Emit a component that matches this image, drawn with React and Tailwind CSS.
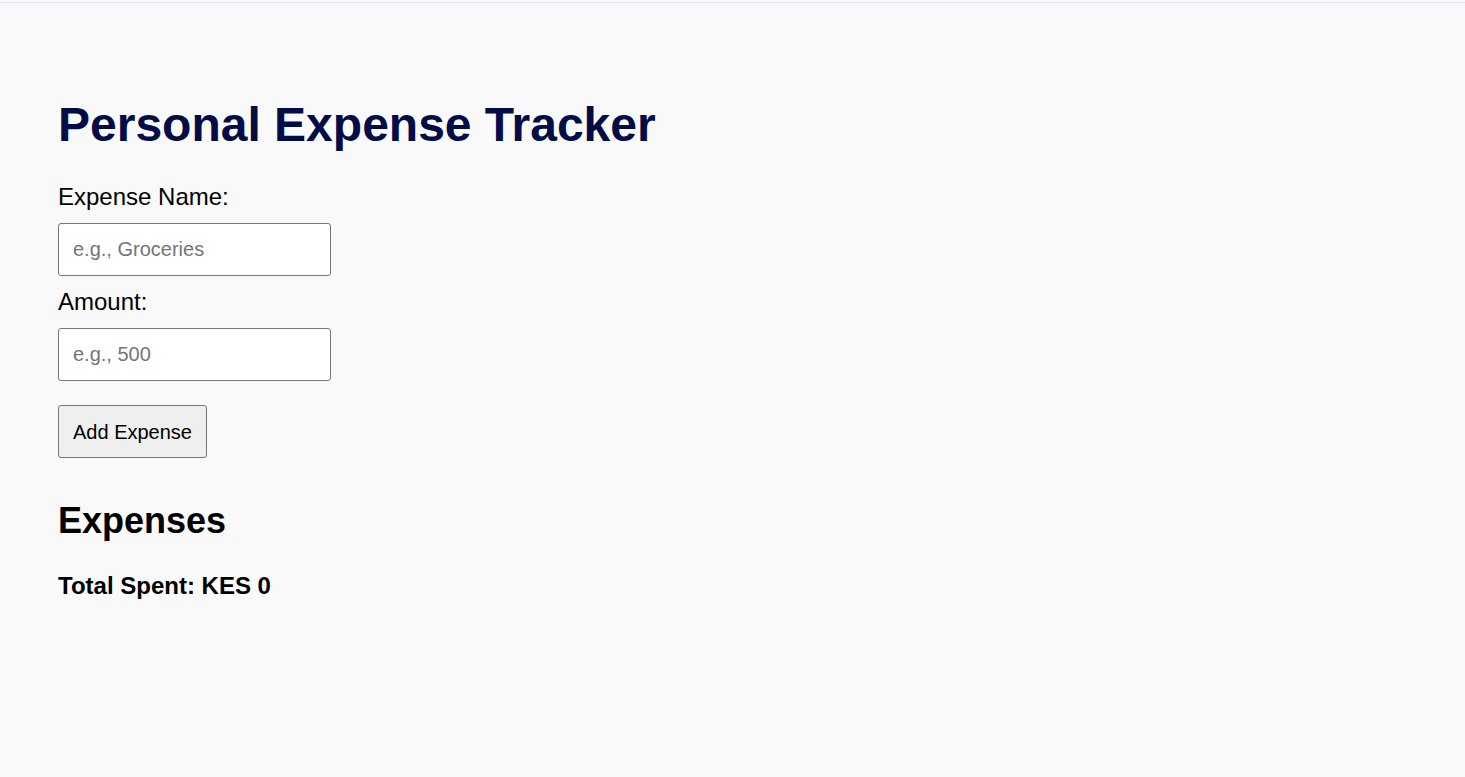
import React, { useState } from 'react';

const App = () => {
  const [name, setName] = useState('');
  const [amount, setAmount] = useState('');
  const [expenses, setExpenses] = useState([]);

  const total = expenses.reduce((sum, e) => sum + e.amount, 0);

  const handleAdd = () => {
    if (!name.trim() || !amount) return;
    setExpenses([...expenses, { name, amount: Number(amount) }]);
    setName('');
    setAmount('');
  };

  return (
    <div className="min-h-screen bg-[#f9f9f9] font-['Liberation_Sans',Arial,sans-serif] text-black">
      {/* thin top rule */}
      <div className="h-[2px]" />
      <div className="h-px bg-[#e6e4f4]" />

      <div className="flex flex-col items-start px-[58px] pt-[94px]">
        <h1 className="text-[48px] font-bold leading-[55px] text-[#020c46]">
          Personal Expense Tracker
        </h1>

        <label className="mt-[31px] text-[24px] leading-[28px]">Expense Name:</label>
        <input
          className="mt-[12px] h-[53px] w-[273px] rounded-[3px] border border-[#767676] bg-white px-[14px] text-[20px] placeholder:text-[#757575] outline-none"
          placeholder="e.g., Groceries"
          value={name}
          onChange={(e) => setName(e.target.value)}
        />

        <label className="mt-[12px] text-[24px] leading-[28px]">Amount:</label>
        <input
          className="mt-[12px] h-[53px] w-[273px] rounded-[3px] border border-[#767676] bg-white px-[14px] text-[20px] placeholder:text-[#757575] outline-none"
          placeholder="e.g., 500"
          type="text"
          value={amount}
          onChange={(e) => setAmount(e.target.value)}
        />

        <button
          className="mt-[24px] h-[53px] rounded-[3px] border border-[#767676] bg-[#efefef] px-[14px] text-[20px]"
          onClick={handleAdd}
        >
          Add Expense
        </button>

        <h2 className="mt-[42px] text-[36px] font-bold leading-[41px]">Expenses</h2>

        {expenses.length > 0 && (
          <ul className="mt-4 text-[20px]">
            {expenses.map((e, i) => (
              <li key={i}>{e.name}: KES {e.amount}</li>
            ))}
          </ul>
        )}

        <h3 className="mt-[31px] text-[24px] font-bold leading-[27px]">
          Total Spent: KES {total}
        </h3>
      </div>
    </div>
  );
};

export default App;
